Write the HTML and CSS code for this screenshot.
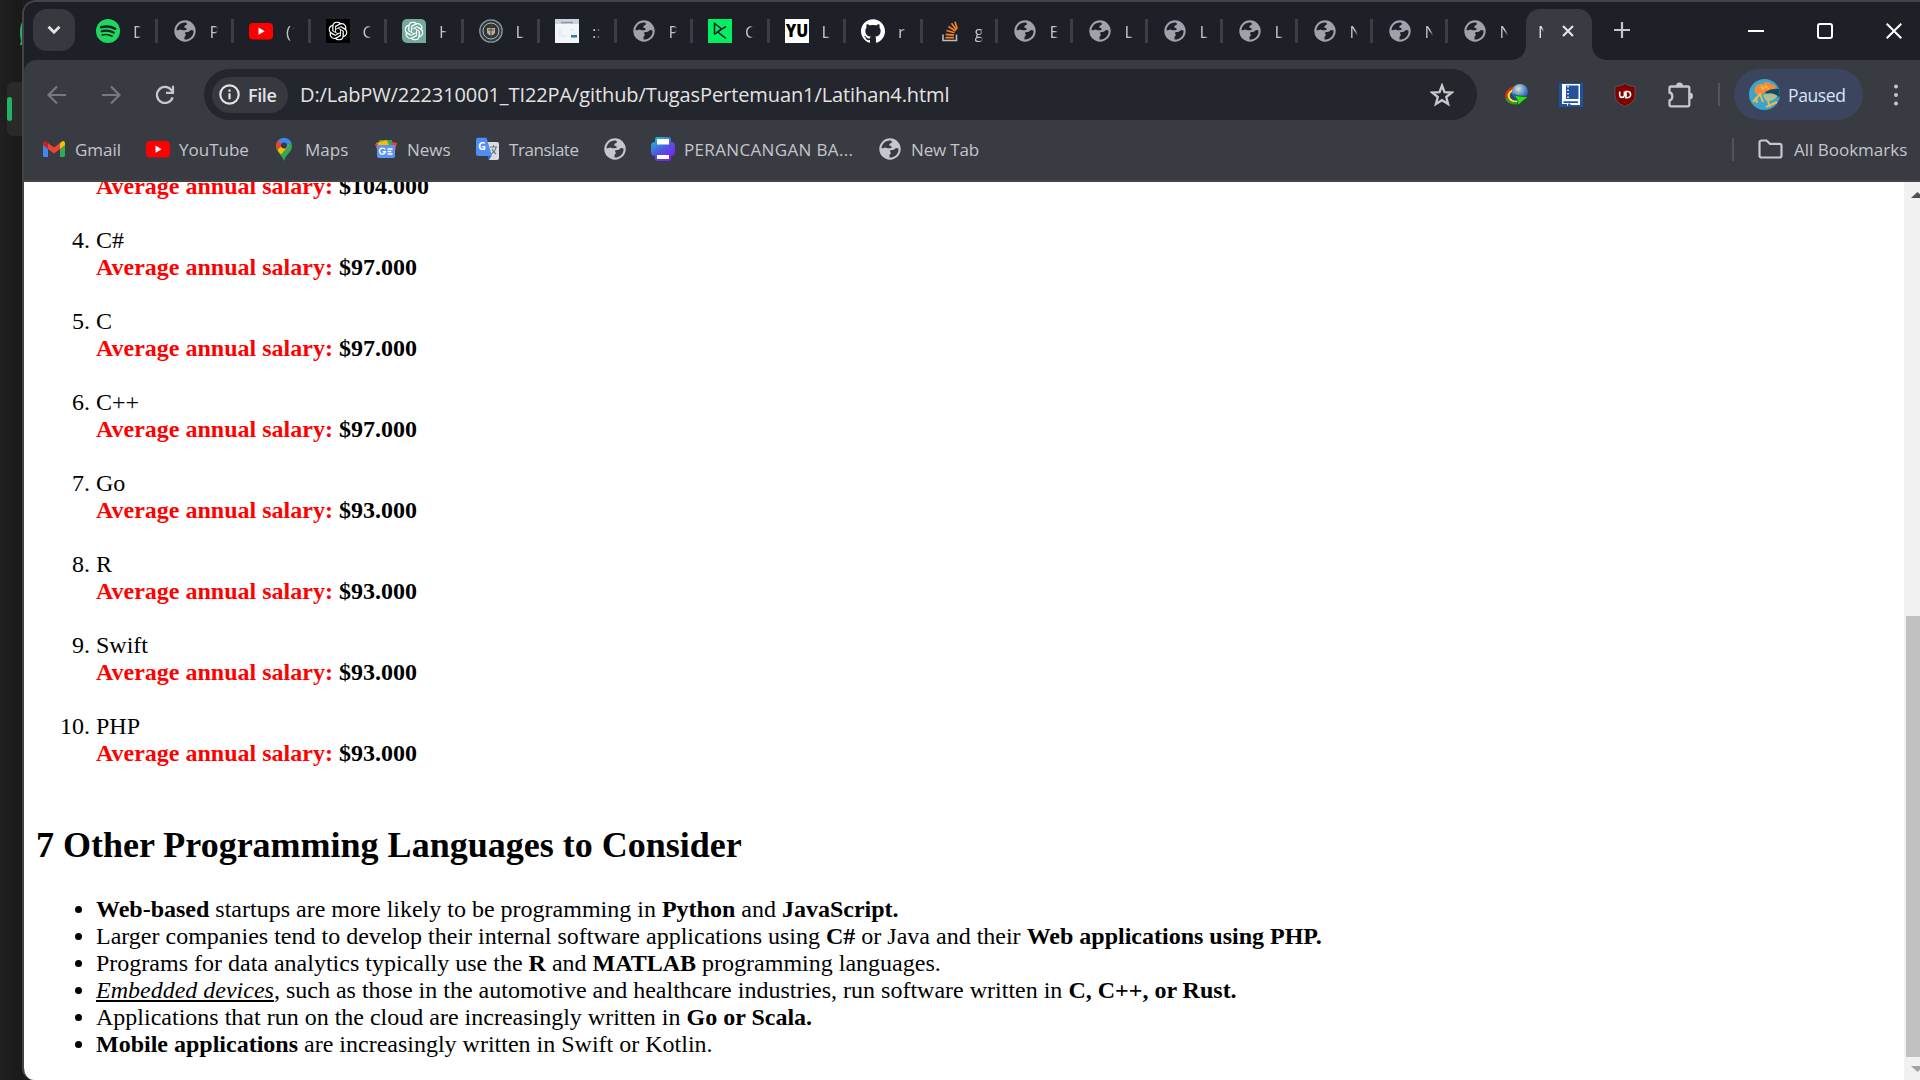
FILE: index.html
```
<!DOCTYPE html>
<html lang="en">
<head>
<meta charset="utf-8">
<title>Latihan 4</title>
<link rel="stylesheet" href="styles.css">
</head>
<body>
<svg class="defs" aria-hidden="true">
  <linearGradient id="printer-fill" x1="0" y1="0" x2=".7" y2="1"><stop offset="0" stop-color="#0fd0d0"/><stop offset=".55" stop-color="#4c5ce0"/><stop offset="1" stop-color="#7a1ff0"/></linearGradient>
  <radialGradient id="ball" cx=".4" cy=".3" r=".8"><stop offset="0" stop-color="#e8e6a0"/><stop offset=".4" stop-color="#6f9fe0"/><stop offset="1" stop-color="#123a9a"/></radialGradient>
  <symbol id="globe" viewBox="0 0 24 24"><path fill-rule="evenodd" fill="currentColor" d="M12 1.3a10.7 10.7 0 1 0 0 21.4 10.7 10.7 0 0 0 0-21.4zM3.5 11.2C3.8 7 7.4 3.6 11.6 3.5c1.500 0 2.400.7 2.400 1.500 0 1.200-2.700 1.200-2.700 2.700 0 1.700 2.500.9 2.500 2.400 0 1.200-1.700 1.200-3 1.200-1.700 0-2.100-.9-3.600-.9-1 0-1.400.8-3.700.8zM11.500 20.500v-2.500c0-.8 1.300-.8 1.300-2 0-1-.8-1.400-.8-2.100 0-1 1.300-1 2.800-1 2.200 0 2.200-1.800 3.700-1.800.9 0 1.200.4 2 .3.500 4.800-3.400 9.400-9 9.100z"/></symbol>
  <symbol id="youtube" viewBox="0 0 24 24"><rect y="4" width="24" height="16.500" rx="4" fill="#f00"/><path d="M9.500 8.500v7.300l6.200-3.600z" fill="#fff"/></symbol>
  <symbol id="knot" viewBox="0 0 24 24"><path fill="#fff" d="M22.2819 9.8211a5.9847 5.9847 0 0 0-.5157-4.9108 6.0462 6.0462 0 0 0-6.5098-2.9A6.0651 6.0651 0 0 0 4.9807 4.1818a5.9847 5.9847 0 0 0-3.9977 2.9 6.0462 6.0462 0 0 0 .7427 7.0966 5.98 5.98 0 0 0 .511 4.9107 6.051 6.051 0 0 0 6.5146 2.9001A5.9847 5.9847 0 0 0 13.2599 24a6.0557 6.0557 0 0 0 5.7718-4.2058 5.9894 5.9894 0 0 0 3.9977-2.9001 6.0557 6.0557 0 0 0-.7475-7.0729zm-9.022 12.6081a4.4755 4.4755 0 0 1-2.8764-1.0408l.1419-.0804 4.7783-2.7582a.7948.7948 0 0 0 .3927-.6813v-6.7369l2.02 1.1686a.071.071 0 0 1 .038.052v5.5826a4.504 4.504 0 0 1-4.4945 4.4944zm-9.6607-4.1254a4.4708 4.4708 0 0 1-.5346-3.0137l.142.0852 4.783 2.7582a.7712.7712 0 0 0 .7806 0l5.8428-3.3685v2.3324a.0804.0804 0 0 1-.0332.0615L9.74 19.9502a4.4992 4.4992 0 0 1-6.1408-1.6464zM2.3408 7.8956a4.485 4.485 0 0 1 2.3655-1.9728V11.6a.7664.7664 0 0 0 .3879.6765l5.8144 3.3543-2.0201 1.1685a.0757.0757 0 0 1-.071 0l-4.8303-2.7865A4.504 4.504 0 0 1 2.3408 7.872zm16.5963 3.8558L13.1038 8.364 15.1192 7.2a.0757.0757 0 0 1 .071 0l4.8303 2.7913a4.4944 4.4944 0 0 1-.6765 8.1042v-5.6772a.79.79 0 0 0-.407-.667zm2.0107-3.0231l-.142-.0852-4.7735-2.7818a.7759.7759 0 0 0-.7854 0L9.409 9.2297V6.8974a.0662.0662 0 0 1 .0284-.0615l4.8303-2.7866a4.4992 4.4992 0 0 1 6.6802 4.66zM8.3065 12.863l-2.02-1.1638a.0804.0804 0 0 1-.038-.0567V6.0742a4.4992 4.4992 0 0 1 7.3757-3.4537l-.142.0805L8.704 5.459a.7948.7948 0 0 0-.3927.6813zm1.0976-2.3654l2.602-1.4998 2.6069 1.4998v2.9994l-2.5974 1.4997-2.6067-1.4997Z"/></symbol>
</svg>
<div class="desktop">
  <aside class="gutter">
    <svg width="3" height="25" viewBox="0 0 3 25"><path d="M3 0Q0 3 0 11q0 6 1 9l-1 4h3z" fill="#2cae6b"/></svg>
    <div class="dock-item"><i></i></div>
  </aside>
  <div class="window">
    <header class="tabstrip">
      <button class="tab-search"><svg width="14" height="10" viewBox="0 0 14 10"><path d="M1.500 1.700 7 7.200l5.500-5.500" fill="none" stroke="#e3e3e3" stroke-width="2.800"/></svg></button>
      <div class="tabs">
        <div class="tab"><svg class="ico" viewBox="0 0 24 24"><circle cx="12" cy="12" r="12" fill="#1ed760"/><g fill="none" stroke="#18251e" stroke-linecap="round"><path d="M5.200 8.300c4.500-1.300 10-.8 14 1.500" stroke-width="2.500"/><path d="M5.700 12.300c4-1.200 8.500-.6 12 1.400" stroke-width="2.100"/><path d="M6.200 16c3.500-.9 7-.5 10 1.200" stroke-width="1.700"/></g></svg><span>D</span></div>
        <div class="tab"><svg class="ico"><use href="#globe"/></svg><span>P</span></div>
        <div class="tab"><svg class="ico"><use href="#youtube"/></svg><span>(1</span></div>
        <div class="tab"><svg class="ico" viewBox="0 0 24 24"><path d="M0 0h24v24H0z"/><use href="#knot" x="2.500" y="2.500" width="19" height="19"/></svg><span>C</span></div>
        <div class="tab"><svg class="ico" viewBox="0 0 24 24"><path d="M5 0h14a5 5 0 0 1 5 5v19H5a5 5 0 0 1-5-5V5a5 5 0 0 1 5-5z" fill="#74aa9c"/><use href="#knot" x="2.500" y="2.500" width="19" height="19"/></svg><span>H</span></div>
        <div class="tab"><svg class="ico" viewBox="0 0 24 24"><circle cx="12" cy="12" r="11.200" fill="#1d3d63" stroke="#9b927e" stroke-width="1.300"/><circle cx="12" cy="12" r="8" fill="#35342f" stroke="#c0b59a"/><path d="M8 9h8v5q-4 5-8 0z" fill="#b3afa4"/><path d="M12 6v12M9 11h6" stroke="#4a4841"/></svg><span>L</span></div>
        <div class="tab"><svg class="ico" viewBox="0 0 24 24"><path fill="#f3f6f9" d="M0 0h24v24H0z"/><path fill="#ccd3dc" d="M0 0h24v5H0z"/><path d="M6 3.500h12" stroke="#8e98a5" stroke-width="1.500"/><path d="M3 11h4m-4 3h4m8-3h4M3 17h8" stroke="#dce1e6"/><path fill="#2879ad" d="M16 16h6v2.500h-6z"/></svg><span>::</span></div>
        <div class="tab"><svg class="ico"><use href="#globe"/></svg><span>P</span></div>
        <div class="tab"><svg class="ico" viewBox="0 0 24 24"><path fill="#03ef62" d="M0 0h24v24H0z"/><path d="M6.500 15V4.500l6 4.500v2L6 15.500M18 7.500l-8.500 5.300 8.500 6.700" fill="none" stroke="#05192d" stroke-width="1.500"/></svg><span>C</span></div>
        <div class="tab"><svg class="ico" viewBox="0 0 24 24"><path fill="#fff" d="M0 0h24v24H0z"/><text class="yu" x=".8" y="18" textLength="22.500" lengthAdjust="spacingAndGlyphs">YU</text></svg><span>L</span></div>
        <div class="tab"><svg class="ico" viewBox="0 0 24 24"><path fill="#fff" d="M12 .297c-6.630 0-12 5.373-12 12 0 5.303 3.438 9.800 8.205 11.385.6.113.82-.258.82-.577 0-.285-.01-1.040-.015-2.040-3.338.724-4.042-1.610-4.042-1.610C4.422 18.070 3.633 17.700 3.633 17.700c-1.087-.744.084-.729.084-.729 1.205.084 1.838 1.236 1.838 1.236 1.070 1.835 2.809 1.305 3.495.998.108-.776.417-1.305.76-1.605-2.665-.3-5.466-1.332-5.466-5.930 0-1.310.465-2.380 1.235-3.220-.135-.303-.54-1.523.105-3.176 0 0 1.005-.322 3.300 1.230.96-.267 1.980-.399 3-.405 1.020.006 2.040.138 3 .405 2.280-1.552 3.285-1.230 3.285-1.230.645 1.653.24 2.873.12 3.176.765.84 1.230 1.910 1.230 3.220 0 4.610-2.805 5.625-5.475 5.920.42.36.81 1.096.81 2.220 0 1.606-.015 2.896-.015 3.286 0 .315.21.69.825.57C20.565 22.092 24 17.592 24 12.297c0-6.627-5.373-12-12-12"/></svg><span>ri</span></div>
        <div class="tab narrow"><svg class="ico" viewBox="0 0 24 24"><path d="M5 15.500v6h13.500v-6" fill="none" stroke="#bcbbbb" stroke-width="1.600"/><path d="M7.500 18.700H16M7.700 15.300l8.300.9M8.500 11.500l8 2.300M10.500 7.500l7 4.500M13.500 4.300l5 6.600M17 2.800l2.200 7" stroke="#f48024" stroke-width="1.700"/></svg><span>g</span></div>
        <div class="tab narrow"><svg class="ico"><use href="#globe"/></svg><span>E</span></div>
        <div class="tab narrow"><svg class="ico"><use href="#globe"/></svg><span>L</span></div>
        <div class="tab narrow"><svg class="ico"><use href="#globe"/></svg><span>L</span></div>
        <div class="tab narrow"><svg class="ico"><use href="#globe"/></svg><span>L</span></div>
        <div class="tab narrow"><svg class="ico"><use href="#globe"/></svg><span>N</span></div>
        <div class="tab narrow"><svg class="ico"><use href="#globe"/></svg><span>N</span></div>
        <div class="tab narrow last"><svg class="ico"><use href="#globe"/></svg><span>N</span></div>
        <div class="tab-active"><span>N</span><svg width="12" height="12" viewBox="0 0 12 12"><path d="m1 1 10 10M11 1 1 11" stroke="#e3e3e3" stroke-width="2.200"/></svg></div>
        <svg class="new-tab" width="16" height="16" viewBox="0 0 16 16"><path d="M8 0v16M0 8h16" stroke="#c4c7cf" stroke-width="2.200"/></svg>
      </div>
      <div class="controls">
        <svg width="16" height="16" viewBox="0 0 16 16"><path d="M0 8h16" stroke="#fff" stroke-width="2"/></svg>
        <svg width="16" height="16" viewBox="0 0 16 16"><rect x="1" y="1" width="14" height="14" rx="2" fill="none" stroke="#fff" stroke-width="2"/></svg>
        <svg width="16" height="16" viewBox="0 0 16 16"><path d="m.7.7 14.600 14.600M15.300.7.700 15.300" stroke="#fff" stroke-width="2"/></svg>
      </div>
    </header>
    <nav class="toolbar">
      <div class="nav">
        <svg width="20" height="20" viewBox="0 0 20 20"><path d="M19 10H2M10 1.500 1.500 10l8.500 8.500" fill="none" stroke="#777980" stroke-width="2.200"/></svg>
        <svg width="20" height="20" viewBox="0 0 20 20"><path d="M1 10h17M10 1.500l8.500 8.500-8.500 8.500" fill="none" stroke="#777980" stroke-width="2.200"/></svg>
        <svg width="20" height="20" viewBox="0 0 20 20"><path d="M17.600 12.300A8 8 0 1 1 16.300 5l2 2.300" fill="none" stroke="#c4c7cf" stroke-width="2.300"/><path d="M18 .8v7h-7" fill="none" stroke="#c4c7cf" stroke-width="2.200"/></svg>
      </div>
      <div class="omnibox">
        <div class="chip"><svg width="21" height="21" viewBox="0 0 21 21"><circle cx="10.500" cy="10.500" r="9.200" fill="none" stroke="#e3e3e3" stroke-width="2.200"/><path d="M10.500 9.300v6M10.500 5.500v2.200" stroke="#e3e3e3" stroke-width="2.200"/></svg><b>File</b></div>
        <span class="url">D:/LabPW/222310001_TI22PA/github/TugasPertemuan1/Latihan4.html</span>
        <svg class="star" width="24" height="24" viewBox="0 0 24 24"><path d="m12 2.500 2.500 6.600 7.300.4-5.600 4.500 1.900 7L12 17.200 5.900 21l1.900-7-5.600-4.500 7.300-.4z" fill="none" stroke="#c9c7c9" stroke-width="2.300"/></svg>
      </div>
      <div class="extensions">
        <svg width="24" height="24" viewBox="0 0 24 24"><g fill="none" stroke-width="2.200"><path d="M10 4C3 6 0 11 1.500 15s7 6 12 4" stroke="#e02a18"/><path d="M11 6C5 8 2.500 11 4 14.500s6 4.500 10 3" stroke="#f6df28"/><path d="M11 8c-4 2-5.500 4-4.500 6s4 3 8 2" stroke="#1847a8"/><path d="M1.500 15c1 4 6 6.500 12 5" stroke="#2a9e24"/></g><circle cx="15" cy="9" r="8" fill="url(#ball)"/><path d="M9 11.500c4 2 8 1.800 14.500 2L12 23l1-4.500z" fill="#2fdc22" stroke="#064b08" stroke-width=".7"/></svg>
        <svg width="24" height="24" viewBox="0 0 24 24"><path fill="#1d529f" d="M0 0h24v24H0z"/><path fill="#fff" d="M3 1h18v21h-9l-2-2-2 3.500V21H3z"/><path fill="#24539b" d="M7 2.500h12.500V16H7zM4.500 18.300h14.500v1.700H4.500z"/><path d="M9 3v12" stroke="#fff" stroke-width="1.500" stroke-dasharray="1.500 2"/></svg>
        <svg width="24" height="24" viewBox="0 0 24 24"><path d="M12 .5q4 3 10 3V13q0 6-10 10.500Q2 19 2 13V3.500q6 0 10-3z" fill="#800000" stroke="#5b5d63" stroke-width=".8"/><path d="M6.700 8.500v4a2.400 2.400 0 0 0 4.700 0v-4M13 8.500v6.200h1.500a3.100 3.100 0 0 0 0-6.200z" fill="none" stroke="#fff" stroke-width="1.600"/></svg>
        <svg width="26" height="26" viewBox="0 0 26 26"><path d="M2.500 6q0-1.500 1.500-1.500h17q1.300 0 1.300 1.500v17q0 1.300-1.300 1.300H4q-1.500 0-1.500-1.300v-4.500c3.500-.8 4-7.200 0-8z" fill="none" stroke="#c4c7cf" stroke-width="2.300"/><path d="M9 4a3.500 3.500 0 0 1 7 0zM22.500 10.500a3.500 3.500 0 0 1 0 7z" fill="#c4c7cf"/></svg>
      </div>
      <i class="rule"></i>
      <div class="profile"><svg width="31" height="31" viewBox="0 0 31 31"><circle cx="15.500" cy="15.500" r="15.500" fill="#3aa5cc"/><path d="M7 15C3 10 8 3 14 5c2-3 7-2 8 0l5 2-1 4-8 1-6 4z" fill="#f58a3c"/><path d="M12 7l2 3 3-3 3 3" stroke="#f5bd3c" stroke-width="1.500" fill="none"/><path d="M16 13q7-4 14-3l1 7-7 4z" fill="#144a60"/><path d="M14 16q8-4 15 1-4 6-12 5z" fill="#aebf94"/><path d="M4 23l7-8 3 8m-7-5 1 6m9 4 11-5m-9-1 2 6" fill="none" stroke="#f2b84a" stroke-width="2"/></svg><span>Paused</span></div>
      <svg class="menu" width="4" height="22" viewBox="0 0 4 22"><g fill="#c4c7cf"><circle cx="2" cy="2.500" r="2"/><circle cx="2" cy="11" r="2"/><circle cx="2" cy="19.500" r="2"/></g></svg>
    </nav>
    <nav class="bookmarks">
      <div class="marks">
        <a><svg class="ico" viewBox="0 0 24 24"><path fill="#4285f4" d="M1 7l5 4v9H2.500Q1 20 1 18.500z"/><path fill="#34a853" d="M18 11l5-4v11.500q0 1.500-1.500 1.500H18z"/><path fill="#fbbc04" d="M18 6l2-1.500c1.500-1 3 0 3 2V8l-5 4z"/><path fill="#c5221f" d="M1 8V6.500c0-2 1.600-3 3-2L6 6v6z"/><path fill="#ea4335" d="M6 6l6 4.500L18 6v6l-6 4.500L6 12z"/></svg><span>Gmail</span></a>
        <a><svg class="ico"><use href="#youtube"/></svg><span>YouTube</span></a>
        <a><svg class="ico" viewBox="0 0 24 24"><path fill="#34a853" d="M4 9a8 8 0 0 1 16 0c0 6-6 8-8 15-1-5-8-9-8-15z"/><path fill="#fbbc04" d="M5.500 13 13.500 4.500 17 8l-8 9.500Q7 15.500 5.500 13z"/><path fill="#ea4335" d="M6 3.500 11 8l-6 5Q2.500 7.500 6 3.500z"/><path fill="#4285f4" d="M6 3.700C9 0 16-.3 19 5l-6 7-3-5z"/><circle cx="12" cy="8.500" r="3" fill="#393b43"/></svg><span>Maps</span></a>
        <a><svg class="ico" viewBox="0 0 24 24"><path fill="#34a853" d="M5 3h13v10H5z"/><path fill="#fbbc04" d="m2 6 11-3 3 9-11 3z"/><path fill="#ea4335" d="M1 7l3-1v9zm17-2 5 1-3 12h-5z"/><path fill="#5c93f4" d="M3 8h18v11q0 2-2 2H5q-2 0-2-2z"/><path d="M11 12.500a3 3 0 1 0 .4 2.300H8.600M13.500 12h5m-5 2.500h4m-4 2.500h5" fill="none" stroke="#fff" stroke-width="1.400"/></svg><span>News</span></a>
        <a><svg class="ico" viewBox="0 0 24 24"><path fill="#dadce0" d="M10 5h11q2 0 2 2v14q0 2-2 2h-8z"/><path d="M14 10h7m-3.500-2v2m2.500 0c-.5 4-3 6-5 7m1-5c1 3 3 4 4 5" fill="none" stroke="#667b85" stroke-width="1.200"/><path d="m11 18h5l-3 5z" fill="#3366cc"/><path fill="#4f8ef7" d="M2 .8h8.500L16 19H2q-2 0-2-2V2.800Q0 .8 2 .8z"/><text class="g-mark" x="2" y="13">G</text></svg><span class="translate">Translate</span></a>
        <a><svg class="ico light"><use href="#globe"/></svg></a>
        <a><svg class="ico" viewBox="0 0 24 24"><path fill="url(#printer-fill)" d="M6 0h12q2 0 2 2v3q4 0 4 4v6q0 4-4 4v3q0 2-2 2H6q-2 0-2-2v-3q-4 0-4-4V9q0-4 4-4V2q0-2 2-2z"/><path fill="#fff" d="M6 2h12v5.500H6zM6 18h12v4H6z"/></svg><span class="design">PERANCANGAN BA...</span></a>
        <a><svg class="ico light"><use href="#globe"/></svg><span class="newtab">New Tab</span></a>
      </div>
      <i class="rule"></i>
      <a class="all"><svg width="25" height="20" viewBox="0 0 25 20"><path d="M1.500 16.500v-13q0-2 2-2h5l3.500 3.300h9.500q2 0 2 2v9.700q0 2-2 2h-18q-2 0-2-2z" fill="none" stroke="#c4c7cf" stroke-width="2.200"/></svg><span>All Bookmarks</span></a>
    </nav>
    <div class="viewport">
      <main class="page">
        <ol start="3">
          <li class="scrolled"><b><em>Average annual salary:</em> $104.000</b><br><br></li>
          <li>C#<br><b><em>Average annual salary:</em> $97.000</b><br><br></li>
          <li>C<br><b><em>Average annual salary:</em> $97.000</b><br><br></li>
          <li>C++<br><b><em>Average annual salary:</em> $97.000</b><br><br></li>
          <li>Go<br><b><em>Average annual salary:</em> $93.000</b><br><br></li>
          <li>R<br><b><em>Average annual salary:</em> $93.000</b><br><br></li>
          <li>Swift<br><b><em>Average annual salary:</em> $93.000</b><br><br></li>
          <li>PHP<br><b><em>Average annual salary:</em> $93.000</b><br><br></li>
        </ol>
        <h2>7 Other Programming Languages to Consider</h2>
        <ul>
          <li><b>Web-based</b> startups are more likely to be programming in <b>Python</b> and <b>JavaScript.</b></li>
          <li>Larger companies tend to develop their internal software applications using <b>C#</b> or Java and their <b>Web applications using PHP.</b></li>
          <li>Programs for data analytics typically use the <b>R</b> and <b>MATLAB</b> programming languages.</li>
          <li><u><i>Embedded devices</i></u>, such as those in the automotive and healthcare industries, run software written in <b>C, C++, or Rust.</b></li>
          <li>Applications that run on the cloud are increasingly written in <b>Go or Scala.</b></li>
          <li><b>Mobile applications</b> are increasingly written in Swift or Kotlin.</li>
        </ul>
      </main>
      <div class="scrollbar">
        <svg width="9" height="6" viewBox="0 0 9 6"><path d="M0 6 6.500 0 13 6z" fill="#505050"/></svg>
        <div class="thumb"></div>
        <svg width="9" height="6" viewBox="0 0 9 6"><path d="M0 0h13L6.500 6z" fill="#a3a3a3"/></svg>
      </div>
    </div>
  </div>
</div>
</body>
</html>
```
FILE: styles.css
```
* { box-sizing: border-box; }
body { margin: 0; background: #1c1c1c; overflow: hidden; }
.defs { position: absolute; width: 0; height: 0; }
svg { display: block; flex: none; }
.ico { width: 24px; height: 24px; }
.desktop { display: flex; width: 1920px; height: 1080px; font-family: "Open Sans", "Noto Sans", sans-serif; }

.gutter { width: 22px; padding-top: 21px; background: linear-gradient(90deg, #202020, #191919); }
.gutter > svg { margin-left: 20px; }
.dock-item { width: 15px; height: 54px; margin: 36px 0 0 7px; padding-top: 15px; border-radius: 6px 0 0 6px; background: #2a2a2a; }
.dock-item i { display: block; width: 5px; height: 24px; border-radius: 3px; background: #1db563; }

.window { flex: 1; min-width: 0; display: flex; flex-direction: column; border: 2px solid #444; border-width: 2px 0 0 2px; border-radius: 14px 0 0 12px; overflow: hidden; background: #1d2027; }

.tabstrip { display: flex; height: 58px; flex: none; background: #1d2027; }
.tab-search { width: 42px; height: 42px; margin: 7px 6px 0 9px; padding: 0; border: 0; border-radius: 14px; background: #373940; display: flex; align-items: center; justify-content: center; }
.tabs { display: flex; }
.tab { display: flex; align-items: center; width: 76.5px; height: 58px; padding-left: 15px; background: linear-gradient(#3c3e46, #3c3e46) right 0 top 17px / 3px 24px no-repeat; color: #9fa2ac; }
.tab.narrow { width: 75px; }
.tab.last { background: none; }
.tab span, .tab-active span { width: 8px; height: 24px; margin: 2px 0 0 13px; overflow: hidden; white-space: nowrap; font-size: 17px; line-height: 24px; color: #c0c3cc; -webkit-mask-image: linear-gradient(90deg, #000 60%, transparent); mask-image: linear-gradient(90deg, #000 60%, transparent); }
.tab-active { position: relative; display: flex; align-items: center; width: 66px; height: 51px; margin: 7px 0 0 3.5px; padding: 0 0 8px 12px; border-radius: 14px 14px 0 0; background: #393b43; }
.tab-active::before, .tab-active::after { content: ""; position: absolute; bottom: 0; width: 14px; height: 14px; }
.tab-active::before { left: -14px; background: radial-gradient(circle at 0 0, transparent 13.5px, #393b43 14px); }
.tab-active::after { right: -14px; background: radial-gradient(circle at 100% 0, transparent 13.5px, #393b43 14px); }
.tab-active span { width: 6px; margin-left: 0; color: #e3e3e3; }
.tab-active svg { margin-left: 18px; }
.new-tab { margin: 20px 0 0 22px; }
.controls { display: flex; gap: 53px; margin: 21px 18px 0 auto; }

.toolbar { display: flex; align-items: center; flex: none; height: 68px; padding-top: 1px; background: #393b43; border-radius: 12px 0 0 0; }
.nav { display: flex; gap: 34px; margin-left: 23px; }
.omnibox { display: flex; align-items: center; width: 1273px; height: 51px; margin-left: 29px; padding: 0 23px 0 8px; border-radius: 26px; background: #23262d; }
.chip { display: flex; align-items: center; width: 76px; height: 36px; padding-left: 7px; border-radius: 18px; background: #373940; color: #e3e3e3; font-size: 18px; }
.chip b { margin-left: 8px; font-weight: 600; letter-spacing: -.4px; }
.url { margin-left: 12px; font-size: 20px; letter-spacing: -.1px; color: #e3e3e3; white-space: nowrap; }
.star { margin-left: auto; }
.extensions { display: flex; align-items: center; gap: 30px; margin-left: 28px; }
.rule { flex: none; width: 2px; height: 23px; background: #51545c; }
.toolbar .rule { margin: 0 14px 0 25px; }
.profile { display: flex; align-items: center; width: 129px; height: 51px; padding-left: 15px; border-radius: 26px; background: #3b465e; color: #d9e2f7; font-size: 17.5px; }
.profile span { margin-left: 8px; letter-spacing: -.4px; }
.menu { margin-left: 31px; }

.bookmarks { display: flex; align-items: center; flex: none; height: 54px; padding-bottom: 10px; border-bottom: 2px solid #444; background: #393b43; color: #c4c5ca; font-size: 17px; }
.marks { display: grid; grid-template-columns: 104px 126px 102px 102px 127px 48px 227px 110px; margin-left: 18px; }
.bookmarks a { display: flex; align-items: center; gap: 9px; white-space: nowrap; }
.light { color: #c4c7cf; }
.translate { letter-spacing: -.45px; }
.design { letter-spacing: .35px; }
.newtab { letter-spacing: -.15px; }
.bookmarks .rule { margin-left: 744px; }
.bookmarks .all { margin-left: 24px; gap: 11px; }
.yu { font: 800 17px "Open Sans", sans-serif; }
.g-mark { font: 700 11px "Open Sans", sans-serif; fill: #fff; }

.viewport { flex: 1; min-height: 0; display: flex; overflow: hidden; background: #fff; }
.page { flex: 1; padding: 0 12px; margin-top: -9px; color: #000; font: 24px/27px "Liberation Serif", "Times New Roman", serif; }
.page ol, .page ul { margin: 0; padding-left: 60px; }
.page em { font-style: normal; color: #f00; }
.page .scrolled { list-style: none; }
.page h2 { margin: 31px 0 30px; font-size: 36px; line-height: 41px; }
.scrollbar { width: 16px; padding: 10px 0 0 7px; background: #f1f1f1; }
.thumb { width: 14px; height: 441px; margin: 418px 0 9px -5px; background: #c1c1c1; }
```
